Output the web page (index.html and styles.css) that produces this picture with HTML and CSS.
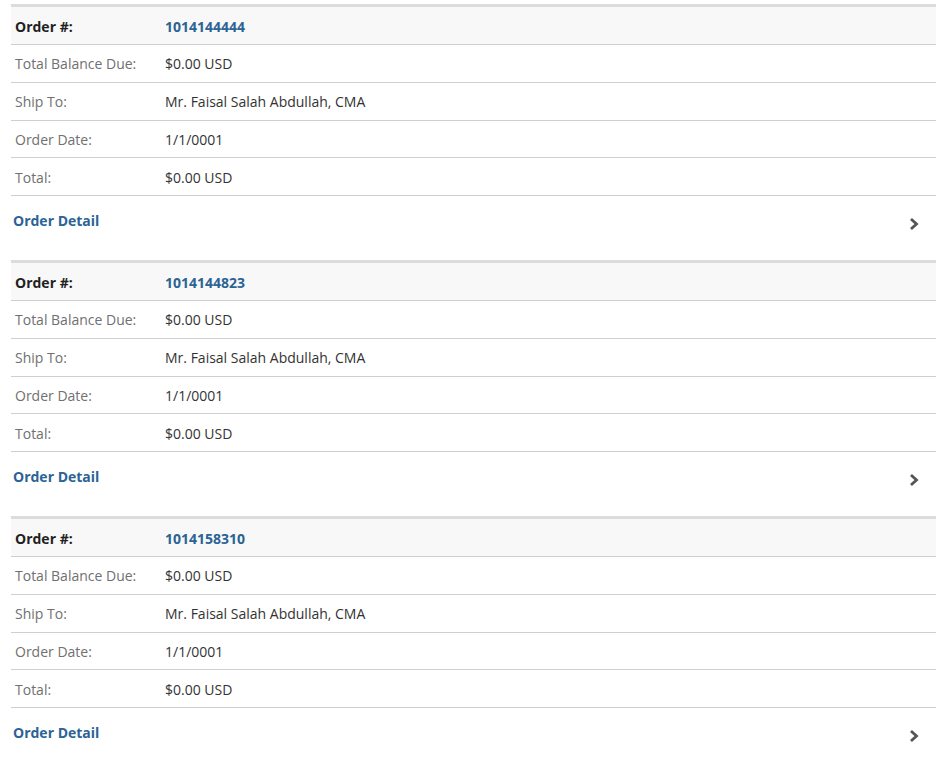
FILE: index.html
```html
<!DOCTYPE html>
<html>
<head>
<meta charset="utf-8">
<link rel="stylesheet" href="styles.css">
</head>
<body>
<div class="orders">
  <section class="order">
    <div class="row head"><span class="label">Order #:</span><a class="value num" href="#">1014144444</a></div>
    <div class="row"><span class="label">Total Balance Due:</span><span class="value">$0.00 USD</span></div>
    <div class="row"><span class="label">Ship To:</span><span class="value">Mr. Faisal Salah Abdullah, CMA</span></div>
    <div class="row"><span class="label">Order Date:</span><span class="value">1/1/0001</span></div>
    <div class="row"><span class="label">Total:</span><span class="value">$0.00 USD</span></div>
    <a class="detail" href="#"><span>Order Detail</span><svg class="chev" viewBox="0 0 10 14" width="10" height="14"><path d="M2 2 L7.5 7 L2 12" fill="none" stroke="#555" stroke-width="2.8"/></svg></a>
  </section>
  <section class="order">
    <div class="row head"><span class="label">Order #:</span><a class="value num" href="#">1014144823</a></div>
    <div class="row"><span class="label">Total Balance Due:</span><span class="value">$0.00 USD</span></div>
    <div class="row"><span class="label">Ship To:</span><span class="value">Mr. Faisal Salah Abdullah, CMA</span></div>
    <div class="row"><span class="label">Order Date:</span><span class="value">1/1/0001</span></div>
    <div class="row"><span class="label">Total:</span><span class="value">$0.00 USD</span></div>
    <a class="detail" href="#"><span>Order Detail</span><svg class="chev" viewBox="0 0 10 14" width="10" height="14"><path d="M2 2 L7.5 7 L2 12" fill="none" stroke="#555" stroke-width="2.8"/></svg></a>
  </section>
  <section class="order">
    <div class="row head"><span class="label">Order #:</span><a class="value num" href="#">1014158310</a></div>
    <div class="row"><span class="label">Total Balance Due:</span><span class="value">$0.00 USD</span></div>
    <div class="row"><span class="label">Ship To:</span><span class="value">Mr. Faisal Salah Abdullah, CMA</span></div>
    <div class="row"><span class="label">Order Date:</span><span class="value">1/1/0001</span></div>
    <div class="row"><span class="label">Total:</span><span class="value">$0.00 USD</span></div>
    <a class="detail" href="#"><span>Order Detail</span><svg class="chev" viewBox="0 0 10 14" width="10" height="14"><path d="M2 2 L7.5 7 L2 12" fill="none" stroke="#555" stroke-width="2.8"/></svg></a>
  </section>
</div>
</body>
</html>
```
FILE: styles.css
```css
html, body {
  margin: 0;
  padding: 0;
  background: #fff;
}

body {
  font-family: "Open Sans", "Liberation Sans", sans-serif;
  font-size: 14px;
  color: #333;
}

.orders {
  width: 925px;
  padding: 4px 0 0 11px;
}

.order {
  border-top: 3px solid #dcdcdc;
}

.row {
  display: flex;
  align-items: center;
  height: 36.75px;
  box-sizing: content-box;
  border-bottom: 1px solid #cfcfcf;
  padding-left: 4px;
}

.row + .row {
  height: 35.75px;
  padding-top: 1px;
}

.row.head {
  background: #f8f8f8;
  padding-top: 1px;
  box-sizing: border-box;
  height: 38px;
}

.label {
  width: 150px;
  flex: none;
  color: #707070;
}

.head .label {
  color: #1f1f1f;
  font-weight: 700;
}

.value {
  color: #333;
}

a.num {
  color: #2b6394;
  font-weight: 700;
  text-decoration: none;
}

.detail {
  display: flex;
  justify-content: space-between;
  height: 64px;
  padding: 15px 17px 0 2px;
  box-sizing: border-box;
  color: #2b6394;
  font-weight: 700;
  text-decoration: none;
}

.chev {
  margin-top: 6px;
}
```
